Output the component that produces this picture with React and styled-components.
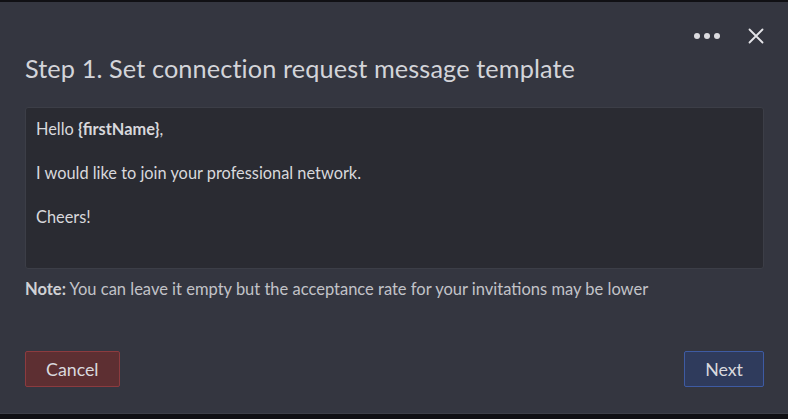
import styled, { createGlobalStyle } from "styled-components";

const GlobalStyle = createGlobalStyle`
  html, body {
    margin: 0;
    padding: 0;
    background: #101014;
    font-family: Lato, "Open Sans", sans-serif;
  }
`;

const Backdrop = styled.div`
  height: 419px;
  overflow: hidden;
  padding-top: 2px;
  box-sizing: border-box;
`;

const Modal = styled.div`
  height: 412px;
  background: #343640;
  border-bottom: 1px solid #3e4049;
  box-sizing: border-box;
  padding: 0 24px 0 25px;
  display: flex;
  flex-direction: column;
`;

const TopBar = styled.div`
  display: flex;
  justify-content: flex-end;
  align-items: center;
  gap: 28px;
  height: 32px;
  padding-top: 18px;
`;

const IconButton = styled.button`
  background: none;
  border: 0;
  padding: 0;
  display: flex;
  align-items: center;
  justify-content: center;
  cursor: pointer;
`;

const Title = styled.h2`
  margin: 1px 0 0;
  font-size: 25.3px;
  line-height: 30px;
  font-weight: 400;
  color: #d3d4d9;
  letter-spacing: 0.1px;
`;

const MessageBox = styled.div`
  margin-top: 24px;
  height: 162px;
  box-sizing: border-box;
  background: #2a2b32;
  border: 1px solid #3c3e47;
  border-radius: 3px;
  padding: 10px 10px;
  color: #d8d8dc;
  font-size: 16.35px;
  line-height: 22px;
`;

const Line = styled.p`
  margin: 0 0 22px;
`;

const Note = styled.p`
  margin: 10px 0 0;
  font-size: 16.5px;
  line-height: 20px;
  color: #c2c3c8;

  strong {
    color: #d0d1d5;
    font-weight: 700;
  }
`;

const Footer = styled.div`
  margin-top: auto;
  margin-bottom: 26px;
  display: flex;
  justify-content: space-between;
`;

const Button = styled.button`
  height: 36px;
  padding: 0 20px;
  border-radius: 2px;
  font-family: Lato, "Open Sans", sans-serif;
  font-size: 17.8px;
  color: #d9d9de;
  background: ${(p) => (p.$variant === "danger" ? "#5d2f32" : "#2f3b5c")};
  border: 1px solid ${(p) => (p.$variant === "danger" ? "#8c3b3f" : "#3e5ba3")};
  cursor: pointer;
`;

export default function App() {
  return (
    <>
      <GlobalStyle />
      <Backdrop>
        <Modal>
          <TopBar>
            <IconButton aria-label="More">
              <svg width="26" height="6" viewBox="0 0 26 6">
                <circle cx="3" cy="3" r="3" fill="#dcdce0" />
                <circle cx="13" cy="3" r="3" fill="#dcdce0" />
                <circle cx="23" cy="3" r="3" fill="#dcdce0" />
              </svg>
            </IconButton>
            <IconButton aria-label="Close">
              <svg width="16" height="16" viewBox="0 0 16 16">
                <path
                  d="M1.5 1.5 L14.5 14.5 M14.5 1.5 L1.5 14.5"
                  stroke="#e4e4e8"
                  strokeWidth="1.8"
                  strokeLinecap="round"
                />
              </svg>
            </IconButton>
          </TopBar>
          <Title>Step 1. Set connection request message template</Title>
          <MessageBox>
            <Line>
              Hello <strong>{"{firstName}"}</strong>,
            </Line>
            <Line>I would like to join your professional network.</Line>
            <Line>Cheers!</Line>
          </MessageBox>
          <Note>
            <strong>Note:</strong> You can leave it empty but the acceptance
            rate for your invitations may be lower
          </Note>
          <Footer>
            <Button $variant="danger">Cancel</Button>
            <Button $variant="primary">Next</Button>
          </Footer>
        </Modal>
      </Backdrop>
    </>
  );
}
